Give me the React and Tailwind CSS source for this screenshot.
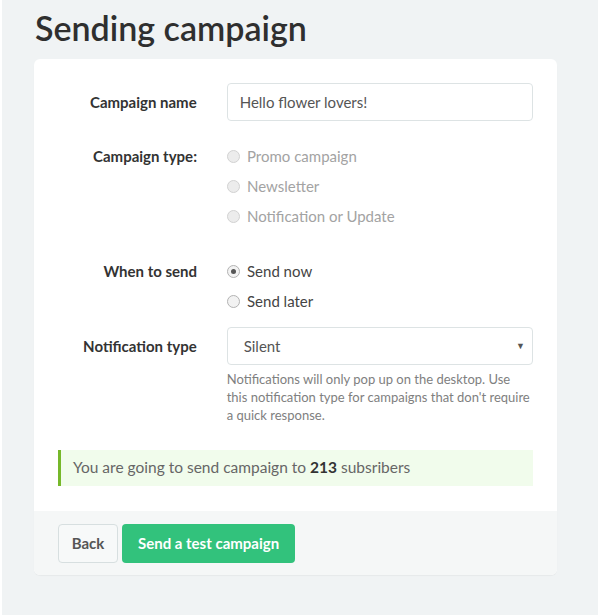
import React from "react";

function Radio({ label, checked, disabled }) {
  return (
    <label className={`flex items-center h-[30px] text-[15px] ${disabled ? "text-[#a3a3a3]" : "text-[#444]"}`}>
      <span
        className={`w-[13px] h-[13px] rounded-full border flex items-center justify-center mr-[7px] ${
          disabled ? "border-[#d2d2d2] bg-[#ececec]" : "border-[#b3b3b3] bg-[#f2f2f2]"
        }`}
      >
        {checked && <span className="w-[5px] h-[5px] rounded-full bg-[#555]" />}
      </span>
      {label}
    </label>
  );
}

export default function App() {
  return (
    <div className="w-[598px] h-[615px] bg-[#f0f3f4] border-l-2 border-white pl-[32px] pt-[8px] font-['Lato','Liberation_Sans',sans-serif]">
      <h1 className="text-[34px] font-semibold text-[#2f2f2f] leading-[40px] ml-[1px] mb-[11px]">Sending campaign</h1>
      <div className="w-[523px] bg-white rounded-[6px] shadow-[0_1px_1px_rgba(0,0,0,0.04)] overflow-hidden">
        <div className="px-[24px] pt-[24px] pb-[25px]">
          {/* campaign name */}
          <div className="flex items-center">
            <div className="w-[139px] text-right text-[15px] font-bold text-[#333]">Campaign name</div>
            <div className="ml-[30px] w-[307px] h-[38px] border border-[#dde3e4] rounded-[4px] flex items-center px-[12px] text-[15px] text-[#555]">
              Hello flower lovers!
            </div>
          </div>

          {/* campaign type */}
          <div className="flex mt-[20px]">
            <div className="w-[139px] text-right text-[15px] font-bold text-[#333] leading-[30px]">Campaign type:</div>
            <div className="ml-[30px] flex flex-col">
              <Radio label="Promo campaign" disabled />
              <Radio label="Newsletter" disabled />
              <Radio label="Notification or Update" disabled />
            </div>
          </div>

          {/* when to send */}
          <div className="flex mt-[25px]">
            <div className="w-[139px] text-right text-[15px] font-bold text-[#333] leading-[30px]">When to send</div>
            <div className="ml-[30px] flex flex-col">
              <Radio label="Send now" checked />
              <Radio label="Send later" />
            </div>
          </div>

          {/* notification type */}
          <div className="flex mt-[11px]">
            <div className="w-[139px] text-right text-[15px] font-bold text-[#333] leading-[38px]">Notification type</div>
            <div className="ml-[30px] w-[307px]">
              <div className="h-[38px] border border-[#dde3e4] rounded-[4px] flex items-center justify-between pl-[16px] pr-[7px] text-[15px] text-[#555]">
                <span>Silent</span>
                <span className="text-[9px] text-[#555]">▼</span>
              </div>
              <p className="mt-[5px] whitespace-nowrap text-[13px] leading-[18px] text-[#808080]">
                Notifications will only pop up on the desktop. Use
                <br />
                this notification type for campaigns that don't require
                <br />
                a quick response.
              </p>
            </div>
          </div>

          {/* alert */}
          <div className="mt-[26px] h-[36px] bg-[#f1fcec] border-l-[3px] border-[#76b82a] flex items-center pl-[12px] text-[15.5px] text-[#666]">
            <span>
              You are going to send campaign to <b className="text-[#333]">213</b> subsribers
            </span>
          </div>
        </div>

        {/* footer */}
        <div className="bg-[#f5f7f7] h-[64px] px-[24px] flex items-center gap-[4px]">
          <button className="h-[39px] w-[60px] border border-[#d7dfe0] rounded-[4px] bg-[#f7f9f9] text-[15px] font-bold text-[#555]">
            Back
          </button>
          <button className="h-[39px] px-[16px] rounded-[4px] bg-[#32c27c] text-[15px] font-bold text-white">
            Send a test campaign
          </button>
        </div>
      </div>
    </div>
  );
}
